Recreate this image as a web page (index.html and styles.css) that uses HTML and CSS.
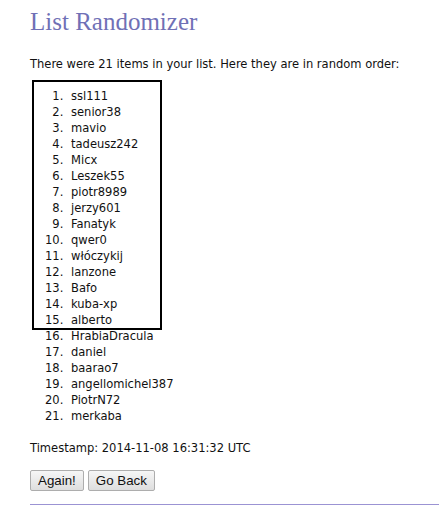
FILE: index.html
```html
<!DOCTYPE html>
<html>
<head>
<meta charset="utf-8">
<link rel="stylesheet" href="styles.css">
</head>
<body>
<div class="page">
  <h1 class="title">List Randomizer</h1>
  <p class="intro">There were 21 items in your list. Here they are in random order:</p>
  <div class="box">
    <ol class="list">
      <li>ssl111</li>
      <li>senior38</li>
      <li>mavio</li>
      <li>tadeusz242</li>
      <li>Micx</li>
      <li>Leszek55</li>
      <li>piotr8989</li>
      <li>jerzy601</li>
      <li>Fanatyk</li>
      <li>qwer0</li>
      <li>włóczykij</li>
      <li>lanzone</li>
      <li>Bafo</li>
      <li>kuba-xp</li>
      <li>alberto</li>
    </ol>
  </div>
  <ol class="list rest" start="16">
    <li>HrabiaDracula</li>
    <li>daniel</li>
    <li>baarao7</li>
    <li>angellomichel387</li>
    <li>PiotrN72</li>
    <li>merkaba</li>
  </ol>
  <p class="stamp">Timestamp: 2014-11-08 16:31:32 UTC</p>
  <div class="buttons">
    <button class="btn">Again!</button>
    <button class="btn">Go Back</button>
  </div>
  <hr class="rule">
</div>
</body>
</html>
```
FILE: styles.css
```css
html, body {
  margin: 0;
  padding: 0;
  background: #fff;
}
.page {
  padding: 0 0 0 30px;
  font-family: "DejaVu Sans Condensed", "DejaVu Sans", sans-serif;
  font-size: 12.8px;
  color: #111;
}
.title {
  margin: 0;
  padding-top: 8px;
  font-family: "Liberation Serif", serif;
  font-weight: normal;
  font-size: 25px;
  line-height: 28px;
  color: #7070b6;
}
.intro {
  margin: 20px 0 0 0;
  line-height: 16px;
}
.box {
  margin: 8px 0 0 2px;
  width: 126px;
  border: 2px solid #000;
  padding: 6px 0 0 0;
  margin-bottom: -2px;
}
.list {
  margin: 0;
  padding-left: 33px;
  line-height: 16px;
}
.list li {
  padding-left: 4px;
}
.rest {
  padding-left: 37px;
}
.stamp {
  margin: 16px 0 0 0;
  line-height: 16px;
}
.buttons {
  margin-top: 14px;
  display: flex;
  gap: 4px;
}
.btn {
  font-family: "Liberation Sans", Arial, sans-serif;
  font-size: 13.33px;
  height: 21px;
  padding: 0 7px;
  border: 1px solid #adadad;
  border-radius: 2px;
  background: linear-gradient(#f6f6f6, #dedede);
  color: #111;
}
.rule {
  margin: 13px 0 0 0;
  border: 0;
  border-top: 1px solid #9b93d3;
}
```
